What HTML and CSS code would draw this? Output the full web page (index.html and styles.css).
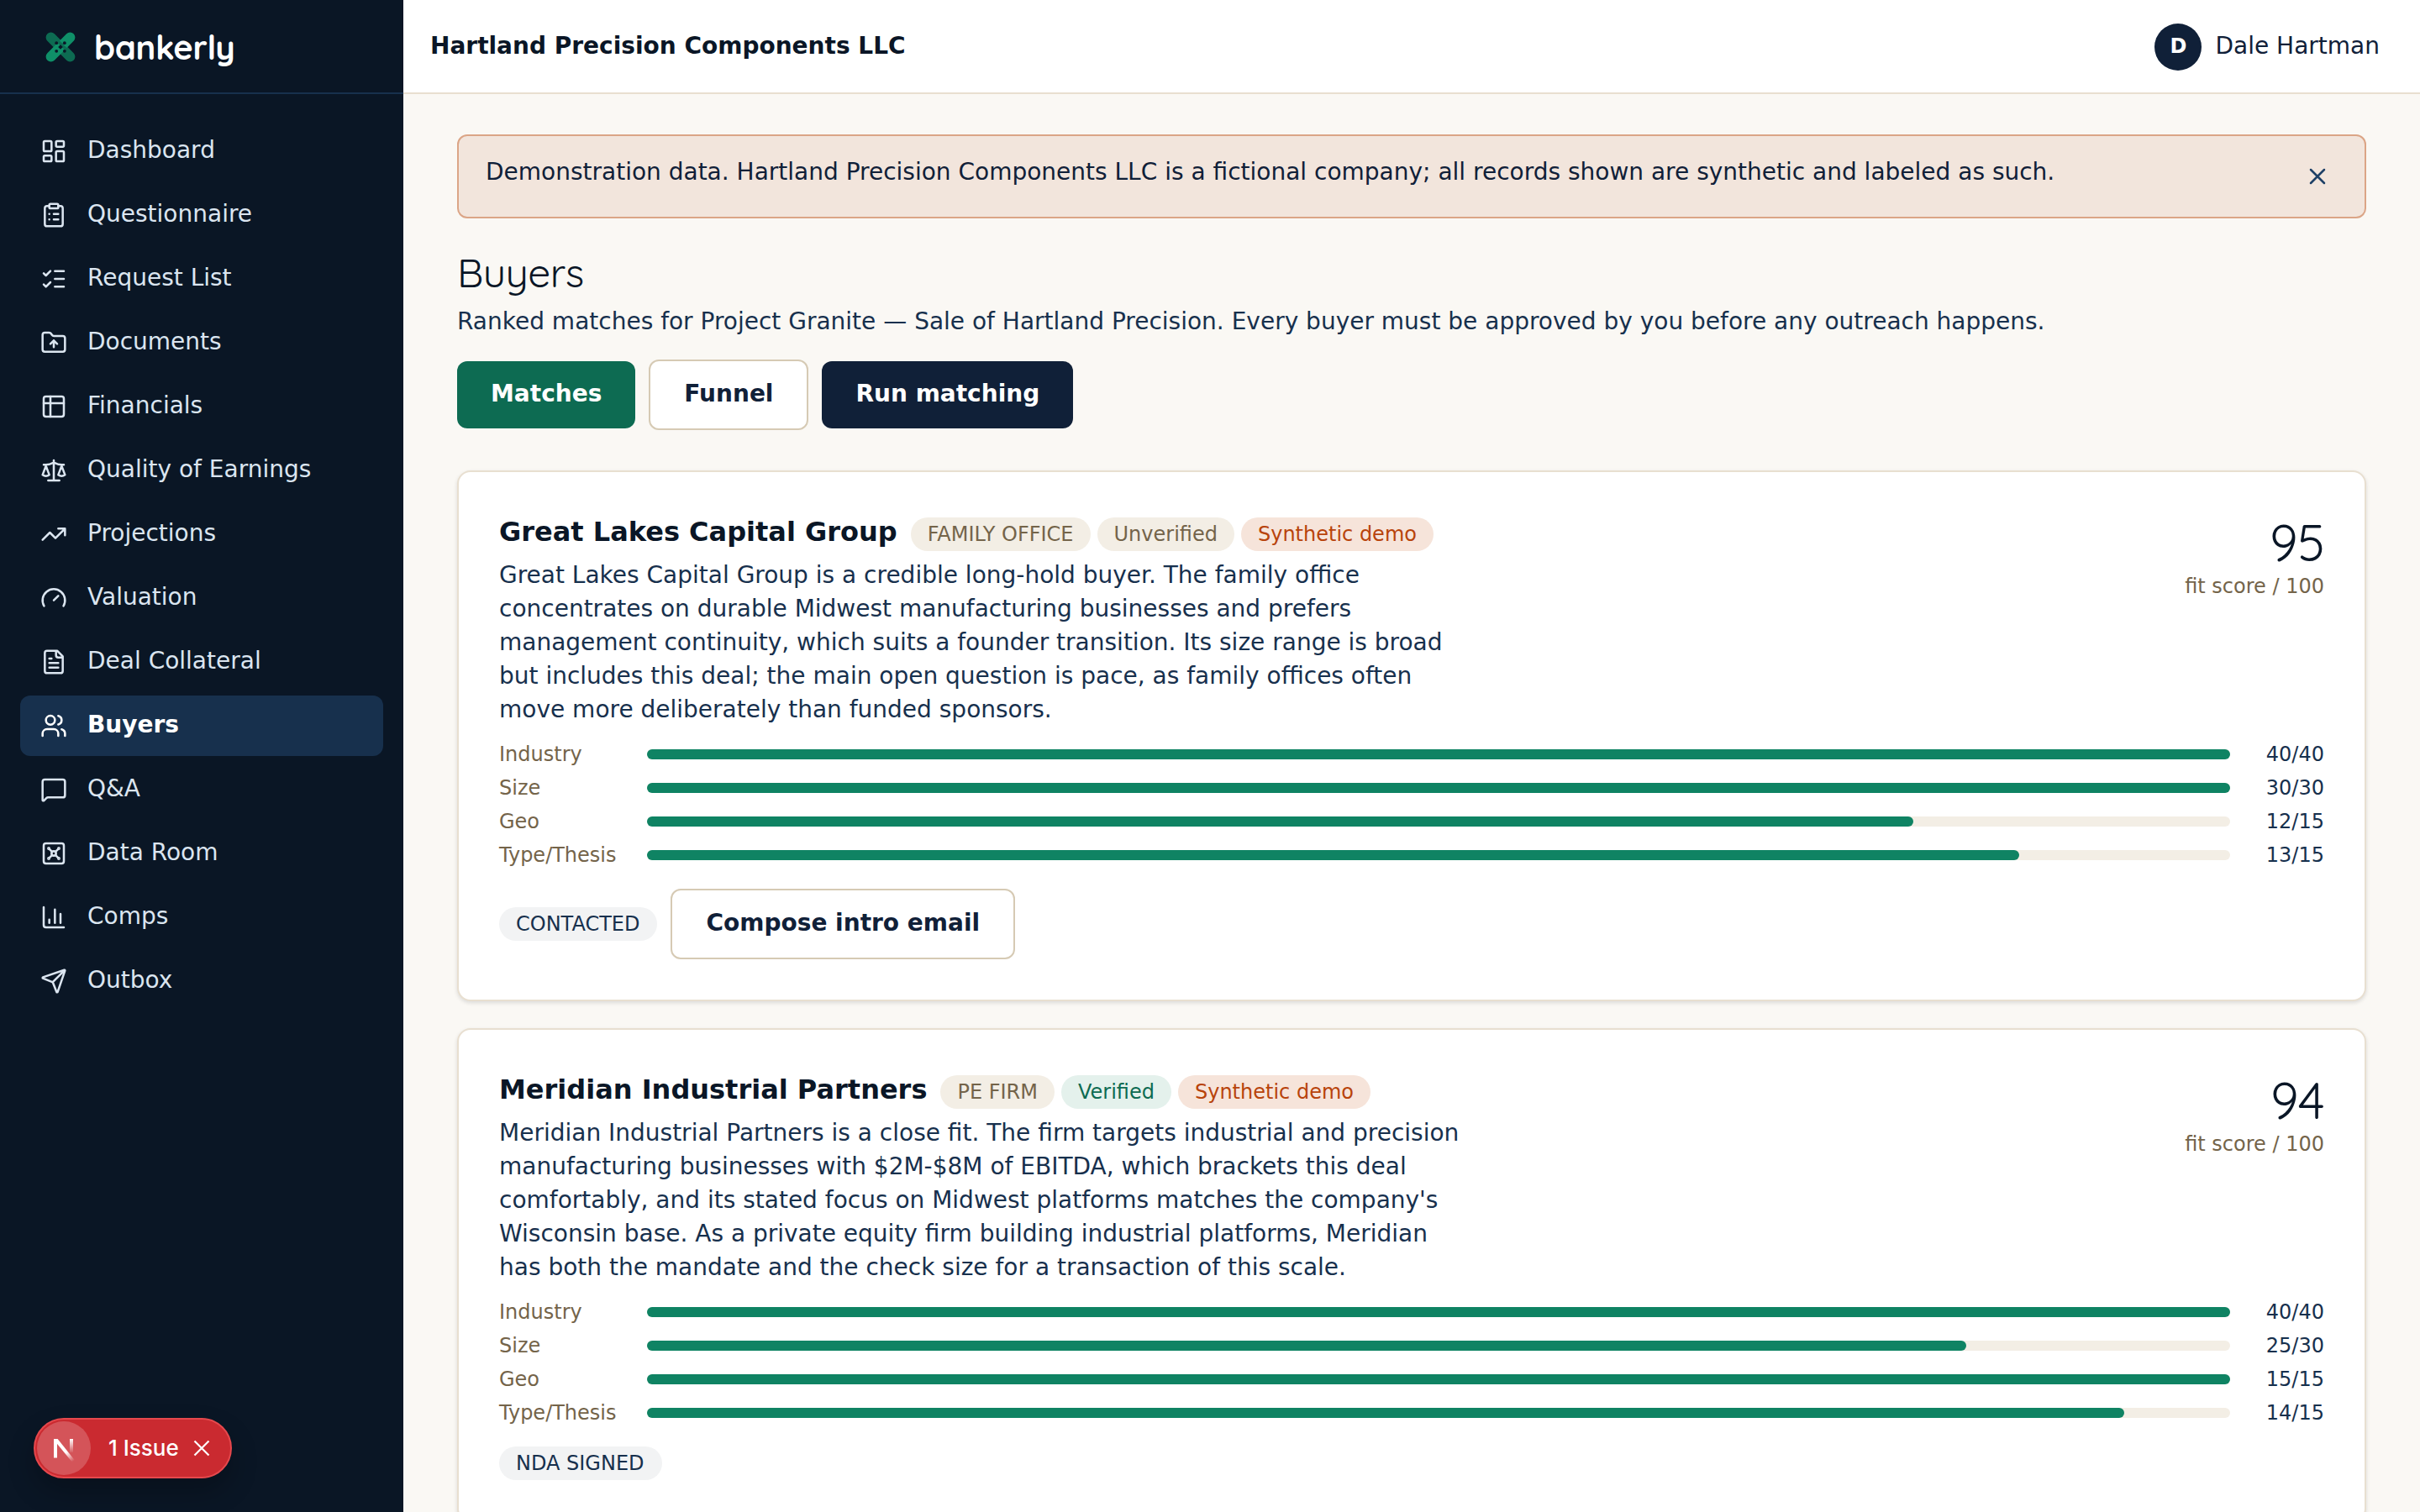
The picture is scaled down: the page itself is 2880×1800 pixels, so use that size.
FILE: index.html
```html
<!DOCTYPE html>
<html lang="en">
<head>
<meta charset="utf-8">
<title>Buyers – bankerly</title>
<link rel="stylesheet" href="styles.css">
</head>
<body>
<div class="app">
  <aside class="sidebar">
    <div class="brand">
      <svg class="logo" viewBox="0 0 36 36">
        <g stroke-linecap="round" fill="none">
          <path d="M6.6 6.6 29.4 29.4" stroke="#0d6b52" stroke-width="12"/>
          <path d="M29.4 6.6 6.600 29.4" stroke="#0f8f68" stroke-width="12"/>
          <path d="M15.500 11.500 24.500 20.500" stroke="#0d6b52" stroke-width="3.200"/>
        </g>
        <g fill="#0a1626"><path d="M18 15.200 20.800 18 18 20.800 15.200 18z"/><circle cx="13.200" cy="13.200" r="1.900"/><circle cx="22.800" cy="13.200" r="1.900"/><circle cx="13.200" cy="22.800" r="1.900"/><circle cx="22.800" cy="22.800" r="1.900"/></g>
      </svg>
      <span class="brand-name">bankerly</span>
    </div>
    <nav class="nav">
      <a class="item"><svg class="icon" viewBox="0 0 24 24"><rect width="7" height="9" x="3" y="3" rx="1"/><rect width="7" height="5" x="14" y="3" rx="1"/><rect width="7" height="9" x="14" y="12" rx="1"/><rect width="7" height="5" x="3" y="16" rx="1"/></svg><span>Dashboard</span></a>
      <a class="item"><svg class="icon" viewBox="0 0 24 24"><rect width="8" height="4" x="8" y="2" rx="1"/><path d="M16 4h2a2 2 0 0 1 2 2v14a2 2 0 0 1-2 2H6a2 2 0 0 1-2-2V6a2 2 0 0 1 2-2h2M12 11h4M12 16h4M8 11h.01M8 16h.01"/></svg><span>Questionnaire</span></a>
      <a class="item"><svg class="icon" viewBox="0 0 24 24"><path d="m3 17 2 2 4-4M3 7l2 2 4-4M13 5h8M13 12h8M13 19h8"/></svg><span>Request List</span></a>
      <a class="item"><svg class="icon" viewBox="0 0 24 24"><path d="M20 20a2 2 0 0 0 2-2V8a2 2 0 0 0-2-2h-7.9a2 2 0 0 1-1.69-.9L9.6 3.9A2 2 0 0 0 7.93 3H4a2 2 0 0 0-2 2v13a2 2 0 0 0 2 2ZM12 10v6M9 13l3-3 3 3"/></svg><span>Documents</span></a>
      <a class="item"><svg class="icon" viewBox="0 0 24 24"><rect width="18" height="18" x="3" y="3" rx="2"/><path d="M3 9h18M9 3v18"/></svg><span>Financials</span></a>
      <a class="item"><svg class="icon" viewBox="0 0 24 24"><path d="m16 16 3-8 3 8c-.87.65-1.92 1-3 1s-2.13-.35-3-1ZM2 16l3-8 3 8c-.87.65-1.92 1-3 1s-2.13-.35-3-1ZM7 21h10M12 3v18M3 7h2c2 0 5-1 7-2 2 1 5 2 7 2h2"/></svg><span>Quality of Earnings</span></a>
      <a class="item"><svg class="icon" viewBox="0 0 24 24"><path d="m22 7-8.5 8.5-5-5L2 17M16 7h6v6"/></svg><span>Projections</span></a>
      <a class="item"><svg class="icon" viewBox="0 0 24 24"><path d="m12 14 4-4M3.34 19a10 10 0 1 1 17.32 0"/></svg><span>Valuation</span></a>
      <a class="item"><svg class="icon" viewBox="0 0 24 24"><path d="M15 2H6a2 2 0 0 0-2 2v16a2 2 0 0 0 2 2h12a2 2 0 0 0 2-2V7ZM14 2v4a2 2 0 0 0 2 2h4M10 9H8M16 13H8M16 17H8"/></svg><span>Deal Collateral</span></a>
      <a class="item active"><svg class="icon" viewBox="0 0 24 24"><path d="M16 21v-2a4 4 0 0 0-4-4H6a4 4 0 0 0-4 4v2"/><circle cx="9" cy="7" r="4"/><path d="M22 21v-2a4 4 0 0 0-3-3.87M16 3.13a4 4 0 0 1 0 7.75"/></svg><span>Buyers</span></a>
      <a class="item"><svg class="icon" viewBox="0 0 24 24"><path d="M22 17a2 2 0 0 1-2 2H6.828a2 2 0 0 0-1.414.586l-2.202 2.202A.71.71 0 0 1 2 21.286V5a2 2 0 0 1 2-2h16a2 2 0 0 1 2 2z"/></svg><span>Q&amp;A</span></a>
      <a class="item"><svg class="icon" viewBox="0 0 24 24"><rect width="18" height="18" x="3" y="3" rx="2"/><circle cx="12" cy="12" r="2"/><path d="m7.9 7.9 2.7 2.7M13.4 10.6l2.7-2.7M7.9 16.1l2.7-2.7M13.4 13.4l2.7 2.7"/><circle cx="7.5" cy="7.5" r=".5"/><circle cx="16.5" cy="7.5" r=".5"/><circle cx="7.5" cy="16.5" r=".5"/><circle cx="16.5" cy="16.5" r=".5"/></svg><span>Data Room</span></a>
      <a class="item"><svg class="icon" viewBox="0 0 24 24"><path d="M3 3v16a2 2 0 0 0 2 2h16M18 17V9M13 17V5M8 17v-3"/></svg><span>Comps</span></a>
      <a class="item"><svg class="icon" viewBox="0 0 24 24"><path d="M14.536 21.686a.5.5 0 0 0 .937-.024l6.5-19a.496.496 0 0 0-.635-.635l-19 6.5a.5.5 0 0 0-.024.937l7.93 3.18a2 2 0 0 1 1.112 1.11zM21.854 2.147l-10.94 10.939"/></svg><span>Outbox</span></a>
    </nav>
  </aside>
  <div class="main">
    <header class="topbar">
      <strong class="company">Hartland Precision Components LLC</strong>
      <div class="user"><span class="avatar">D</span><span>Dale Hartman</span></div>
    </header>
    <main class="content">
      <div class="banner">
        <p>Demonstration data. Hartland Precision Components LLC is a fictional company; all records shown are synthetic and labeled as such.</p>
        <span class="dismiss"><svg class="icon" viewBox="0 0 24 24"><path d="M18 6 6 18M6 6l12 12"/></svg></span>
      </div>
      <h1 class="title">Buyers</h1>
      <p class="subtitle">Ranked matches for Project Granite — Sale of Hartland Precision. Every buyer must be approved by you before any outreach happens.</p>
      <div class="actions">
        <button class="btn green">Matches</button>
        <button class="btn outline">Funnel</button>
        <button class="btn navy">Run matching</button>
      </div>
      <section class="card">
        <div class="card-head">
          <div class="info">
            <div class="name-row"><h2>Great Lakes Capital Group</h2><span class="pill">FAMILY OFFICE</span><span class="pill">Unverified</span><span class="pill demo">Synthetic demo</span></div>
            <p class="desc">Great Lakes Capital Group is a credible long-hold buyer. The family office<br>concentrates on durable Midwest manufacturing businesses and prefers<br>management continuity, which suits a founder transition. Its size range is broad<br>but includes this deal; the main open question is pace, as family offices often<br>move more deliberately than funded sponsors.</p>
          </div>
          <div class="score"><span class="num">95</span><span class="cap">fit score / 100</span></div>
        </div>
        <div class="bars">
          <span class="label">Industry</span><span class="track"><span class="fill" style="width:100%"></span></span><span class="val">40/40</span>
          <span class="label">Size</span><span class="track"><span class="fill" style="width:100%"></span></span><span class="val">30/30</span>
          <span class="label">Geo</span><span class="track"><span class="fill" style="width:80%"></span></span><span class="val">12/15</span>
          <span class="label">Type/Thesis</span><span class="track"><span class="fill" style="width:86.67%"></span></span><span class="val">13/15</span>
        </div>
        <div class="foot"><span class="pill status">CONTACTED</span><button class="btn outline">Compose intro email</button></div>
      </section>
      <section class="card">
        <div class="card-head">
          <div class="info">
            <div class="name-row"><h2>Meridian Industrial Partners</h2><span class="pill">PE FIRM</span><span class="pill verified">Verified</span><span class="pill demo">Synthetic demo</span></div>
            <p class="desc">Meridian Industrial Partners is a close fit. The firm targets industrial and precision<br>manufacturing businesses with $2M-$8M of EBITDA, which brackets this deal<br>comfortably, and its stated focus on Midwest platforms matches the company's<br>Wisconsin base. As a private equity firm building industrial platforms, Meridian<br>has both the mandate and the check size for a transaction of this scale.</p>
          </div>
          <div class="score"><span class="num">94</span><span class="cap">fit score / 100</span></div>
        </div>
        <div class="bars">
          <span class="label">Industry</span><span class="track"><span class="fill" style="width:100%"></span></span><span class="val">40/40</span>
          <span class="label">Size</span><span class="track"><span class="fill" style="width:83.33%"></span></span><span class="val">25/30</span>
          <span class="label">Geo</span><span class="track"><span class="fill" style="width:100%"></span></span><span class="val">15/15</span>
          <span class="label">Type/Thesis</span><span class="track"><span class="fill" style="width:93.33%"></span></span><span class="val">14/15</span>
        </div>
        <div class="foot"><span class="pill status">NDA SIGNED</span></div>
      </section>
    </main>
  </div>
</div>
<div class="issue">
  <span class="issue-mark"><svg viewBox="0 0 64 64">
    <defs><linearGradient id="ng1" x1="36" y1="36" x2="44" y2="47" gradientUnits="userSpaceOnUse"><stop stop-color="#fff"/><stop offset="1" stop-color="#fff" stop-opacity="0"/></linearGradient><linearGradient id="ng2" x1="41" y1="21" x2="41" y2="38" gradientUnits="userSpaceOnUse"><stop stop-color="#fff"/><stop offset="1" stop-color="#fff" stop-opacity="0"/></linearGradient></defs>
    <path d="M20 21h4v22.500H20z" fill="#fff"/><path d="M20 21h4.600L45 46.600l-3 2.200L20 22z" fill="url(#ng1)"/><path d="M39 21h4v16h-4z" fill="url(#ng2)"/></svg></span>
  <span class="issue-text">1 Issue</span>
  <svg class="issue-x" viewBox="0 0 20 20"><path d="M1.500 1.500l17 17M18.500 1.500l-17 17"/></svg>
</div>
</body>
</html>
```
FILE: styles.css
```css
* { box-sizing: border-box; margin: 0; padding: 0; }
body { height: 1800px; overflow: hidden; background: #faf8f4; color: #102038; font: 28px/40px "DejaVu Sans", sans-serif; }
.app { display: flex; height: 1800px; }
.sidebar { width: 480px; flex: none; background: #0a1625; }
.brand { height: 112px; display: flex; align-items: center; gap: 22px; padding: 2px 54px 0; border-bottom: 2px solid #17304d; }
.logo { width: 36px; height: 36px; }
.brand-name { color: #fff; font: 700 40px/48px Quicksand, Lato, sans-serif; letter-spacing: -.01em; }
.nav { display: flex; flex-direction: column; gap: 4px; padding: 32px 24px; }
.item { display: flex; align-items: center; gap: 24px; height: 72px; padding: 0 24px; border-radius: 12px; color: #dbe5f0; }
.item span { padding-bottom: 2px; }
.item.active { background: #17304d; color: #fff; font-weight: 700; }
.icon { width: 32px; height: 32px; flex: none; fill: none; stroke: currentColor; stroke-width: 1.9; stroke-linecap: round; stroke-linejoin: round; }
.main { flex: 1; min-width: 0; }
.topbar { height: 112px; display: flex; align-items: center; justify-content: space-between; padding: 0 48px 0 32px; background: #fff; border-bottom: 2px solid #e8dfd0; }
.company { color: #0a1626; }
.user { display: flex; align-items: center; gap: 16px; }
.avatar { width: 56px; height: 56px; margin-top: 2px; border-radius: 50%; background: #102038; color: #fff; font-size: 24px; font-weight: 700; line-height: 55px; text-align: center; }
.content { padding: 48px 64px 0; }
.banner { display: flex; justify-content: space-between; align-items: flex-start; height: 100px; padding: 24px 32px; border: 2px solid #dba586; border-radius: 12px; background: #f2e5dc; }
.banner p { line-height: 38px; }
.dismiss { display: grid; place-items: center; width: 48px; height: 48px; color: #1e4066; }
.title { margin-top: 34px; color: #0a1626; font: 400 48px/60px Quicksand, Lato, sans-serif; letter-spacing: -.01em; }
.subtitle { margin-top: 9px; color: #17304d; }
.actions { display: flex; align-items: center; gap: 16px; margin-top: 25px; }
.btn { height: 80px; padding: 0 40px 2px; border: 0; border-radius: 12px; font: 700 28px/40px "DejaVu Sans", sans-serif; color: #fff; }
.green { background: #0d6b52; }
.navy { background: #102038; }
.outline { height: 84px; background: #fff; color: #102038; border: 2px solid #d6cab4; }
.card { margin-top: 48px; padding: 48px; background: #fff; border: 2px solid #e8dfd0; border-radius: 16px; box-shadow: 0 2px 4px rgba(10, 22, 38, .08), 0 2px 6px rgba(10, 22, 38, .05); }
.card + .card { margin-top: 32px; }
.card-head { display: flex; justify-content: space-between; height: 272px; }
.name-row { display: flex; align-items: center; gap: 8px; height: 52px; }
h2 { margin-right: 8px; padding-bottom: 6px; color: #0a1626; font-size: 32px; line-height: 48px; }
.pill { height: 40px; padding: 0 20px; border-radius: 20px; background: #f3eee5; color: #74644a; font-size: 24px; line-height: 40px; }
.pill.demo { background: #f6e4da; color: #b8430b; }
.pill.verified { background: #e4f1ec; color: #0d6b52; }
.pill.status { padding-right: 21px; background: #f2f3f4; color: #17304d; }
.desc { margin-top: 3px; color: #17304d; white-space: nowrap; }
.score { display: flex; flex-direction: column; align-items: flex-end; }
.num { color: #0a1626; font: 400 60px/72px Quicksand, Lato, sans-serif; letter-spacing: -.01em; }
.cap { color: #74644a; font-size: 24px; line-height: 32px; }
.bars { display: grid; grid-template-columns: 160px 1fr 96px; align-items: center; gap: 8px 16px; font-size: 24px; line-height: 32px; }
.label { color: #74644a; }
.track { height: 12px; border-radius: 6px; background: #f3eee5; }
.fill { display: block; height: 12px; border-radius: 6px; background: #0f8363; }
.val { text-align: right; color: #17304d; }
.foot { display: flex; align-items: center; gap: 16px; margin-top: 24px; }
.issue { position: absolute; left: 40px; top: 1688px; width: 236px; height: 72px; display: flex; align-items: center; padding-left: 2px; border: 2px solid #e5484d; border-radius: 36px; background: #ca2a30; box-shadow: 0 16px 32px rgba(0, 0, 0, .24); color: #fff; }
.issue-mark { width: 64px; height: 64px; border-radius: 50%; background: rgba(255, 255, 255, .2); }
.issue-mark svg { display: block; }
.issue-text { width: 82px; margin: 0 19px 0 21px; font: 500 26px/40px Inter, sans-serif; white-space: nowrap; }
.issue-x { width: 20px; height: 20px; fill: none; stroke: #fff; stroke-width: 2.2; }
```
